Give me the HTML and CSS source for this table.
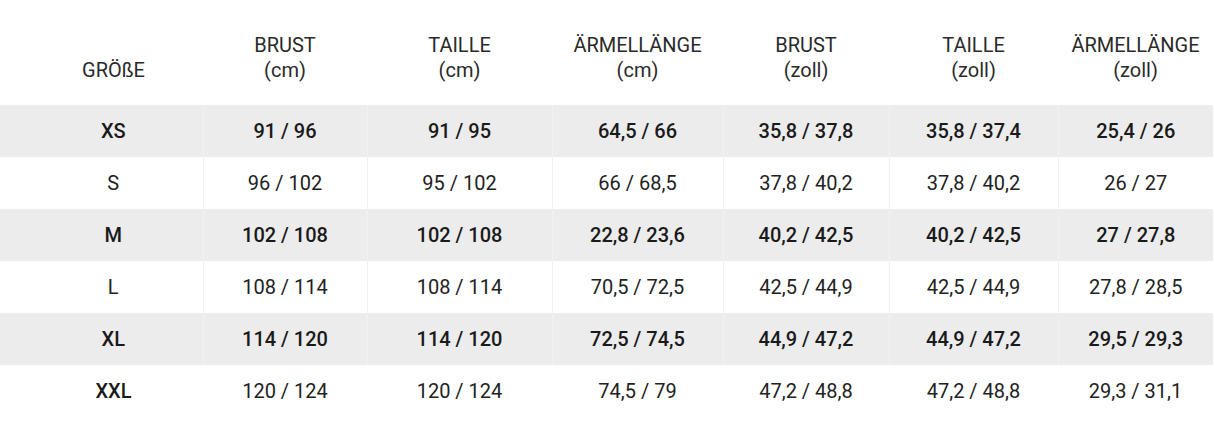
FILE: index.html
```html
<!DOCTYPE html>
<html lang="de">
<head>
<meta charset="utf-8">
<title>Größentabelle</title>
<link rel="stylesheet" href="styles.css">
</head>
<body>
<table class="size-table">
  <colgroup>
    <col class="c1"><col class="c2"><col class="c3"><col class="c4"><col class="c5"><col class="c6"><col class="c7">
  </colgroup>
  <thead>
    <tr>
      <th class="size">GRÖßE</th>
      <th>BRUST<br>(cm)</th>
      <th>TAILLE<br>(cm)</th>
      <th>ÄRMELLÄNGE<br>(cm)</th>
      <th>BRUST<br>(zoll)</th>
      <th>TAILLE<br>(zoll)</th>
      <th>ÄRMELLÄNGE<br>(zoll)</th>
    </tr>
  </thead>
  <tbody>
    <tr class="shade">
      <td class="size">XS</td><td>91 / 96</td><td>91 / 95</td><td>64,5 / 66</td><td>35,8 / 37,8</td><td>35,8 / 37,4</td><td>25,4 / 26</td>
    </tr>
    <tr>
      <td class="size">S</td><td>96 / 102</td><td>95 / 102</td><td>66 / 68,5</td><td>37,8 / 40,2</td><td>37,8 / 40,2</td><td>26 / 27</td>
    </tr>
    <tr class="shade">
      <td class="size">M</td><td>102 / 108</td><td>102 / 108</td><td>22,8 / 23,6</td><td>40,2 / 42,5</td><td>40,2 / 42,5</td><td>27 / 27,8</td>
    </tr>
    <tr>
      <td class="size">L</td><td>108 / 114</td><td>108 / 114</td><td>70,5 / 72,5</td><td>42,5 / 44,9</td><td>42,5 / 44,9</td><td>27,8 / 28,5</td>
    </tr>
    <tr class="shade">
      <td class="size">XL</td><td>114 / 120</td><td>114 / 120</td><td>72,5 / 74,5</td><td>44,9 / 47,2</td><td>44,9 / 47,2</td><td>29,5 / 29,3</td>
    </tr>
    <tr class="last">
      <td class="size strong">XXL</td><td>120 / 124</td><td>120 / 124</td><td>74,5 / 79</td><td>47,2 / 48,8</td><td>47,2 / 48,8</td><td>29,3 / 31,1</td>
    </tr>
  </tbody>
</table>
</body>
</html>
```

FILE: styles.css
```css
html, body {
  margin: 0;
  padding: 0;
  background: #ffffff;
}

body {
  font-family: Roboto, "Liberation Sans", Arial, sans-serif;
  color: #222222;
}

.size-table {
  width: 1213px;
  border-collapse: collapse;
  table-layout: fixed;
  font-size: 20px;
}

.c1 { width: 203px; }
.c2 { width: 164px; }
.c3 { width: 185px; }
.c4 { width: 171px; }
.c5 { width: 166px; }
.c6 { width: 169px; }
.c7 { width: 155px; }

.size-table th {
  height: 105px;
  box-sizing: border-box;
  padding: 0 0 22px 0;
  vertical-align: bottom;
  text-align: center;
  font-weight: 400;
  line-height: 25px;
  color: #2a2a2a;
}

.size-table th.size,
.size-table td.size {
  padding-left: 24px;
}

.size-table td {
  height: 52px;
  padding: 0;
  text-align: center;
  vertical-align: middle;
  line-height: 24px;
  font-weight: 400;
  border-right: 1px solid #f1f1f1;
}

.size-table td:last-child {
  border-right: none;
}

.size-table tr.last td {
  border-right: none;
}

.size-table tr.shade td {
  background: #ececec;
  font-weight: 500;
  color: #1a1a1a;
}

.size-table td.strong {
  font-weight: 500;
  color: #1a1a1a;
}
```
